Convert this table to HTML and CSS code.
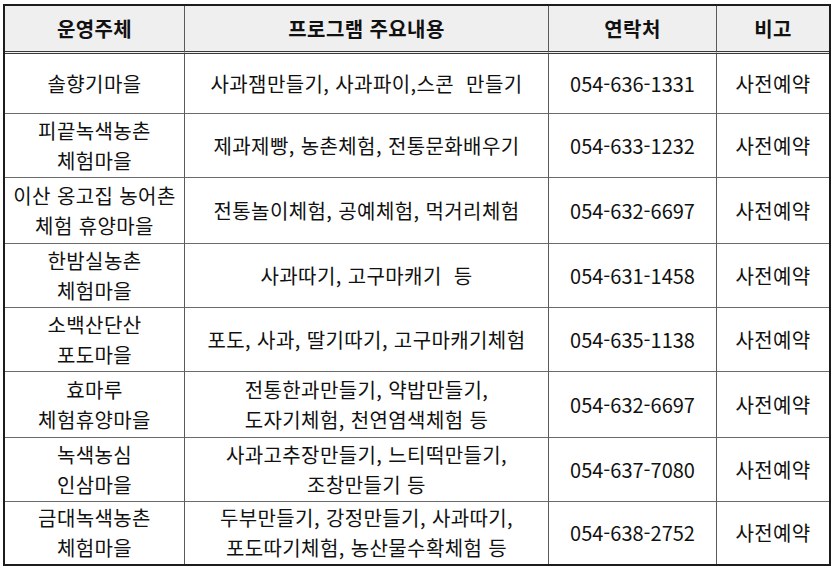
FILE: index.html
```html
<!DOCTYPE html>
<html lang="ko">
<head>
<meta charset="utf-8">
<link rel="stylesheet" href="styles.css">
</head>
<body>
<table class="grid">
  <colgroup>
    <col class="c1"><col class="c2"><col class="c3"><col class="c4">
  </colgroup>
  <thead>
    <tr class="head"><th>운영주체</th><th>프로그램 주요내용</th><th>연락처</th><th>비고</th></tr>
  </thead>
  <tbody>
    <tr class="r1"><td>솔향기마을</td><td>사과잼만들기, 사과파이,스콘&nbsp; 만들기</td><td class="tel">054-636-1331</td><td>사전예약</td></tr>
    <tr><td>피끝녹색농촌<br>체험마을</td><td>제과제빵, 농촌체험, 전통문화배우기</td><td class="tel">054-633-1232</td><td>사전예약</td></tr>
    <tr class="tall"><td>이산 옹고집 농어촌<br>체험 휴양마을</td><td>전통놀이체험, 공예체험, 먹거리체험</td><td class="tel">054-632-6697</td><td>사전예약</td></tr>
    <tr><td>한밤실농촌<br>체험마을</td><td>사과따기, 고구마캐기&nbsp; 등</td><td class="tel">054-631-1458</td><td>사전예약</td></tr>
    <tr><td>소백산단산<br>포도마을</td><td>포도, 사과, 딸기따기, 고구마캐기체험</td><td class="tel">054-635-1138</td><td>사전예약</td></tr>
    <tr class="tall"><td>효마루<br>체험휴양마을</td><td>전통한과만들기, 약밥만들기,<br>도자기체험, 천연염색체험 등</td><td class="tel">054-632-6697</td><td>사전예약</td></tr>
    <tr><td>녹색농심<br>인삼마을</td><td>사과고추장만들기, 느티떡만들기,<br>조창만들기 등</td><td class="tel">054-637-7080</td><td>사전예약</td></tr>
    <tr class="last"><td>금대녹색농촌<br>체험마을</td><td>두부만들기, 강정만들기, 사과따기,<br>포도따기체험, 농산물수확체험 등</td><td class="tel">054-638-2752</td><td>사전예약</td></tr>
  </tbody>
</table>
</body>
</html>
```
FILE: styles.css
```css
html, body {
  margin: 0;
  padding: 0;
  background: #ffffff;
}

body {
  padding: 4px 0 0 3px;
  font-family: "Noto Sans CJK KR", "Noto Sans", sans-serif;
  color: #111111;
}

.grid {
  border-collapse: separate;
  border-spacing: 0;
  table-layout: fixed;
  width: 828px;
  border: 2px solid #1c1c1c;
}

.c1 { width: 180px; }
.c2 { width: 364px; }
.c3 { width: 168px; }
.c4 { width: 112px; }

.grid th,
.grid td {
  padding: 0;
  text-align: center;
  vertical-align: middle;
  font-size: 20px;
  letter-spacing: 0.4px;
  line-height: 30px;
  border-right: 1px solid #5a5a5a;
  border-bottom: 1px solid #6a6a6a;
}

.grid td.tel {
  letter-spacing: 0;
}

.grid th:last-child,
.grid td:last-child {
  border-right: none;
}

.head th {
  height: 45px;
  background: #efefef;
  font-weight: 700;
  border-bottom: 3px double #3a3a3a;
}

.grid tbody tr td {
  height: 63px;
}

.grid tbody tr.r1 td {
  height: 59px;
}

.grid tbody tr.tall td {
  height: 65px;
}

.grid tbody tr.last td {
  height: 62px;
  border-bottom: none;
}
```
